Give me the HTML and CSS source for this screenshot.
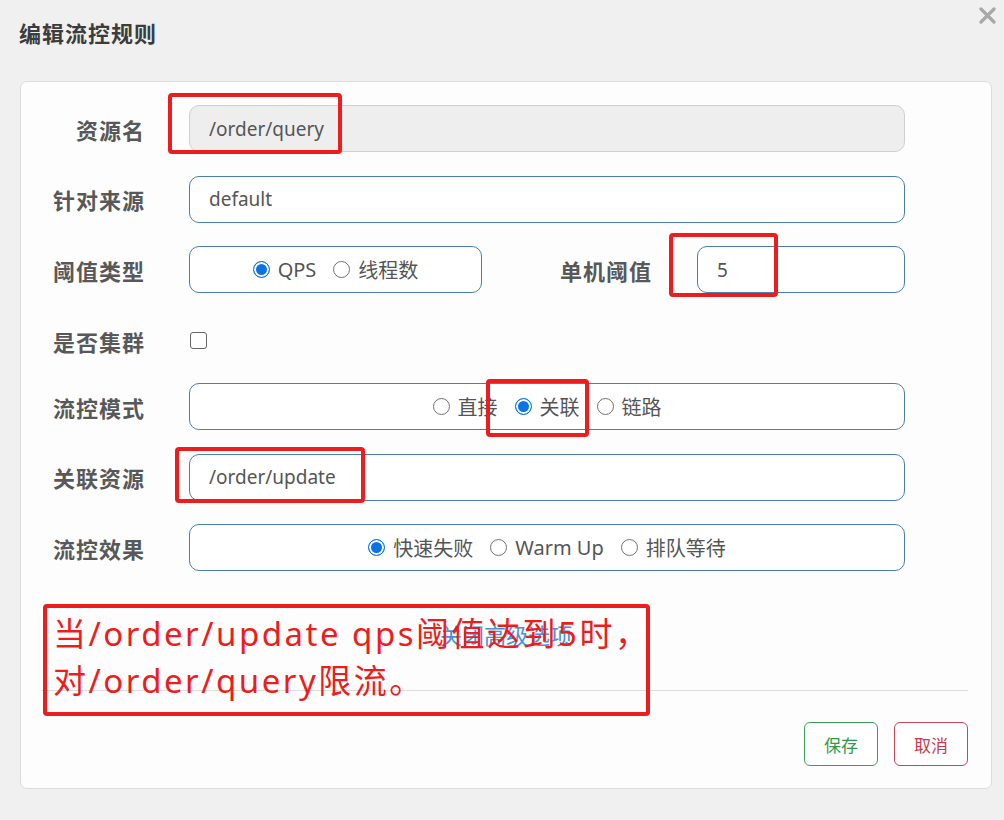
FILE: index.html
```html
<!DOCTYPE html>
<html lang="zh-CN">
<head>
<meta charset="utf-8">
<title>编辑流控规则</title>
<link rel="stylesheet" href="styles.css">
</head>
<body>
<div class="modal">
  <div class="modal-header">
    <h4 class="modal-title">编辑流控规则</h4>
    <button class="close" type="button" aria-label="关闭">
      <svg width="17" height="17" viewBox="0 0 17 17"><path d="M2 2 L15 15 M15 2 L2 15" stroke="#a8a8a8" stroke-width="3.2" stroke-linecap="round"/></svg>
    </button>
  </div>
  <div class="card">
    <form class="form">
      <div class="row">
        <label class="lbl">资源名</label>
        <div class="input disabled">/order/query</div>
      </div>
      <div class="row">
        <label class="lbl">针对来源</label>
        <div class="input">default</div>
      </div>
      <div class="row">
        <label class="lbl">阈值类型</label>
        <div class="split">
          <div class="input radios">
            <span class="radio on"></span><span class="rl">QPS</span>
            <span class="radio"></span><span class="rl">线程数</span>
          </div>
          <label class="lbl">单机阈值</label>
          <div class="input">5</div>
        </div>
      </div>
      <div class="row check">
        <label class="lbl">是否集群</label>
        <div class="checkrow"><span class="checkbox"></span></div>
      </div>
      <div class="row">
        <label class="lbl">流控模式</label>
        <div class="input radios">
          <span class="radio"></span><span class="rl">直接</span>
          <span class="radio on"></span><span class="rl">关联</span>
          <span class="radio"></span><span class="rl">链路</span>
        </div>
      </div>
      <div class="row">
        <label class="lbl">关联资源</label>
        <div class="input">/order/update</div>
      </div>
      <div class="row">
        <label class="lbl">流控效果</label>
        <div class="input radios">
          <span class="radio on"></span><span class="rl">快速失败</span>
          <span class="radio"></span><span class="rl">Warm Up</span>
          <span class="radio"></span><span class="rl">排队等待</span>
        </div>
      </div>
      <div class="adv"><a class="adv-link">关闭高级选项</a></div>
    </form>
    <div class="footer">
      <button class="btn save" type="button">保存</button>
      <button class="btn cancel" type="button">取消</button>
    </div>
  </div>
</div>

<div class="mark m1"></div>
<div class="mark m2"></div>
<div class="mark m3"></div>
<div class="mark m4"></div>
<div class="mark m5"><p class="note">当/order/update qps阈值达到5时，<br>对/order/query限流。</p></div>
</body>
</html>
```

FILE: styles.css
```css
html, body {
  margin: 0;
  padding: 0;
}
body {
  width: 1004px;
  height: 820px;
  background: #f0f0f0;
  font-family: "Noto Sans", "Noto Sans CJK SC", sans-serif;
  color: #555;
  position: relative;
  overflow: hidden;
}
.modal {
  padding: 0 12px 0 20px;
}
.modal-header {
  height: 81px;
  display: flex;
  justify-content: space-between;
  align-items: flex-start;
}
.modal-title {
  margin: 17px 0 0 -1px;
  font-family: "Noto Sans CJK SC", sans-serif;
  font-size: 22px;
  font-weight: 700;
  letter-spacing: 1px;
  color: #3c3c3c;
  line-height: 30px;
}
.close {
  border: 0;
  background: none;
  padding: 0;
  margin: 7px -4px 0 0;
  width: 17px;
  height: 17px;
}
.close svg { display: block; }
.card {
  width: 972px;
  height: 708px;
  box-sizing: border-box;
  background: #fdfdfd;
  border: 1px solid #dcdcdc;
  border-radius: 7px;
  display: flex;
  flex-direction: column;
}
.form {
  padding: 23px 86px 0 0;
  display: flex;
  flex-direction: column;
  gap: 23.5px;
}
.row {
  display: grid;
  grid-template-columns: 124px 1fr;
  column-gap: 44px;
  align-items: center;
  height: 47px;
}
.row.check {
  height: 38px;
  margin-top: 5px;
}
.lbl {
  text-align: right;
  font-family: "Noto Sans CJK SC", sans-serif;
  font-weight: 700;
  font-size: 22px;
  letter-spacing: 1px;
  color: #585858;
}
.input {
  height: 47px;
  box-sizing: border-box;
  border: 1px solid #4a7eac;
  border-radius: 10px;
  padding: 0 19px;
  display: flex;
  align-items: center;
  font-size: 19px;
  color: #555;
  background: #fff;
}
.input.disabled {
  background: #eeeeee;
  border-color: #cfcfcf;
}
.split {
  display: grid;
  grid-template-columns: 293px 125px 1fr;
  column-gap: 45px;
  align-items: center;
}
.radios {
  justify-content: center;
  padding: 0;
}
.radio {
  width: 17px;
  height: 17px;
  box-sizing: border-box;
  border: 1.5px solid #707070;
  border-radius: 50%;
  margin-right: 8px;
  background: #fff;
  flex: none;
}
.radio.on {
  border-color: #0b74e5;
  box-shadow: inset 0 0 0 2px #fff;
  background: #0b74e5;
}
.rl {
  margin-right: 17px;
  font-size: 20px;
  color: #555;
}
.rl:last-child { margin-right: 0; }
.checkrow {
  display: flex;
  align-items: center;
}
.checkbox {
  width: 17px;
  height: 17px;
  box-sizing: border-box;
  border: 1.5px solid #666;
  border-radius: 3px;
  margin-left: 1px;
  background: #fff;
}
.adv {
  text-align: center;
  margin: 24px -86px 0 0;
  line-height: 30px;
}
.adv-link {
  font-family: "Noto Sans CJK SC", sans-serif;
  color: #4a8fd8;
  font-size: 22px;
}
.footer {
  margin: auto 23px 0 20px;
  border-top: 1px solid #dddddd;
  padding: 31px 0 22px;
  display: flex;
  justify-content: flex-end;
  gap: 16px;
}
.btn {
  width: 74px;
  height: 44px;
  box-sizing: border-box;
  background: #fff;
  border-radius: 6px;
  font-family: "Noto Sans CJK SC", sans-serif;
  font-size: 17px;
  padding: 0;
}
.btn.save {
  border: 1px solid #3d9c55;
  color: #2f9a4a;
}
.btn.cancel {
  border: 1px solid #c8455a;
  color: #c8394f;
}
.mark {
  position: absolute;
  box-sizing: border-box;
  border: 4px solid #ee1d1d;
  border-radius: 4px;
}
.m1 { left: 168px; top: 93px; width: 174px; height: 61px; }
.m2 { left: 669px; top: 233px; width: 109px; height: 64px; }
.m3 { left: 486px; top: 379px; width: 103px; height: 58px; }
.m4 { left: 175px; top: 447px; width: 190px; height: 56px; }
.m5 { left: 43px; top: 604px; width: 607px; height: 112px; }
.note {
  margin: 2px 0 0 6px;
  font-family: "Noto Sans", "Noto Sans CJK SC", sans-serif;
  font-size: 33px;
  letter-spacing: 2.5px;
  line-height: 47px;
  color: #ee1d1d;
  white-space: nowrap;
}
```
